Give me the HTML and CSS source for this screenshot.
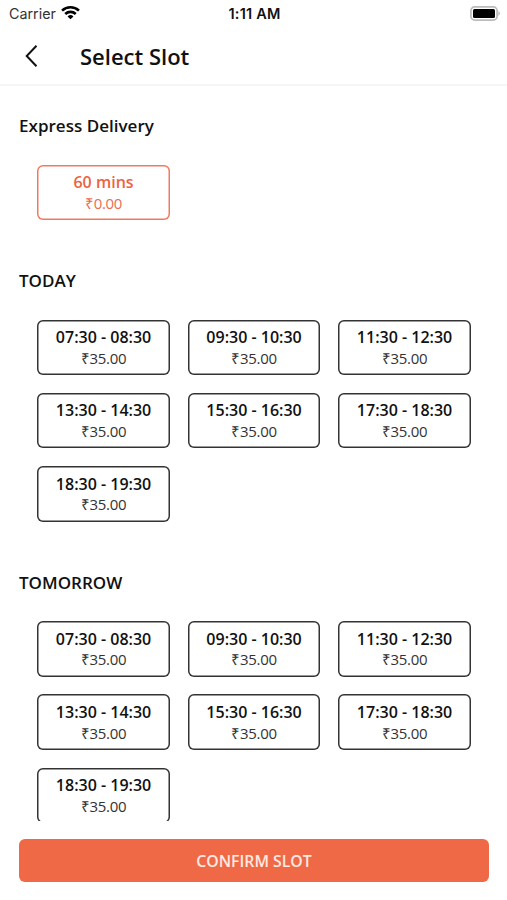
FILE: index.html
```html
<!DOCTYPE html>
<html lang="en">
<head>
<meta charset="utf-8">
<title>Select Slot</title>
<link rel="stylesheet" href="styles.css">
</head>
<body>
<div class="status">
  <span class="carrier">Carrier
    <svg class="wifi" width="19" height="15" viewBox="0 0 18 14" fill="none" stroke="#000" stroke-width="2.500"><path d="M1 5.200C5.500.9 12.500.9 17 5.200M4 8.400c2.900-2.700 7.100-2.700 10 0"/><path d="M9 13.500 6.200 10.700a4 4 0 0 1 5.600 0z" fill="#000" stroke="none"/></svg>
  </span>
  <span class="time">1:11 AM</span>
  <svg class="battery" width="31" height="15" viewBox="0 0 31 15"><rect x=".9" y=".9" width="26.200" height="13.200" rx="3.800" fill="#fff" stroke="#bbb" stroke-width="1.700"/><rect x="3" y="3" width="22" height="9" rx="1.500"/><path d="M28.500 5q2.500 2.500 0 5z" fill="#aaa"/></svg>
</div>
<header class="header">
  <svg class="back" width="14" height="24" viewBox="0 0 14 24" fill="none" stroke="#111" stroke-width="2"><path d="M11.500 1.800 1.700 12l9.800 10.200"/></svg>
  <h1>Select Slot</h1>
</header>
<main class="content">
  <section class="express">
    <h2>Express Delivery</h2>
    <div class="slots"><div class="slot selected"><b>60 mins</b><span>₹0.00</span></div></div>
  </section>
  <section class="today">
    <h2>TODAY</h2>
    <div class="slots">
      <div class="slot"><b>07:30 - 08:30</b><span>₹35.00</span></div>
      <div class="slot"><b>09:30 - 10:30</b><span>₹35.00</span></div>
      <div class="slot"><b>11:30 - 12:30</b><span>₹35.00</span></div>
      <div class="slot"><b>13:30 - 14:30</b><span>₹35.00</span></div>
      <div class="slot"><b>15:30 - 16:30</b><span>₹35.00</span></div>
      <div class="slot"><b>17:30 - 18:30</b><span>₹35.00</span></div>
      <div class="slot"><b>18:30 - 19:30</b><span>₹35.00</span></div>
    </div>
  </section>
  <section>
    <h2>TOMORROW</h2>
    <div class="slots">
      <div class="slot"><b>07:30 - 08:30</b><span>₹35.00</span></div>
      <div class="slot"><b>09:30 - 10:30</b><span>₹35.00</span></div>
      <div class="slot"><b>11:30 - 12:30</b><span>₹35.00</span></div>
      <div class="slot"><b>13:30 - 14:30</b><span>₹35.00</span></div>
      <div class="slot"><b>15:30 - 16:30</b><span>₹35.00</span></div>
      <div class="slot"><b>17:30 - 18:30</b><span>₹35.00</span></div>
      <div class="slot"><b>18:30 - 19:30</b><span>₹35.00</span></div>
    </div>
  </section>
</main>
<footer class="footer"><button class="confirm">CONFIRM SLOT</button></footer>
</body>
</html>
```
FILE: styles.css
```css
* { box-sizing: border-box; }
body { margin: 0; height: 900px; display: flex; flex-direction: column; overflow: hidden; background: #fff; color: #111; font-family: "Open Sans", sans-serif; }
.status { height: 27px; flex: none; display: grid; grid-template-columns: 1fr auto 1fr; align-items: center; padding: 0 6px 0 9px; font: 14.300px/27px Inter, sans-serif; }
.carrier { display: flex; align-items: center; gap: 6px; color: #333; }
.wifi { margin: -2px 0 0 -1px; }
.time { font-size: 14.500px; font-weight: 600; letter-spacing: .2px; margin-left: -1px; }
.battery { justify-self: end; }
.header { height: 59px; flex: none; display: flex; align-items: center; padding-left: 25px; border-bottom: 2px solid #f5f5f5; }
h1 { margin: 0 0 0 41px; font-size: 22px; line-height: 30px; font-weight: 600; }
.content { height: 735px; flex: none; overflow: hidden; padding: 28px 19px 0; }
section { height: 301.500px; }
.express { height: 155px; }
h2 { margin: 0 0 26.500px; font-size: 17px; line-height: 24px; font-weight: 600; letter-spacing: .02px; }
.slots { display: grid; grid-template-columns: repeat(3, 132.500px); gap: 17.800px 18px; padding-left: 18.300px; }
.slot { height: 55.500px; box-shadow: inset 0 0 0 1.500px #333; border-radius: 6px; display: flex; flex-direction: column; align-items: center; padding-top: 7.500px; font-size: 15px; line-height: 20.700px; }
.slot b { font-size: 16px; font-weight: 600; }
.slot span { color: #333; font-size: 15px; letter-spacing: -.35px; }
.selected { color: #ed6241; box-shadow: inset 0 0 0 1.500px #f07a60; }
.slot.selected span { color: #ed6c50; }
.footer { flex: 1; padding: 18px 18px 0 19px; }
.confirm { display: block; width: 100%; height: 43px; border: 0; border-radius: 6px; background: #f06946; color: #ffe9e2; font: 600 15.800px/43px "Open Sans", sans-serif; padding: 1px 0 0; }
```
